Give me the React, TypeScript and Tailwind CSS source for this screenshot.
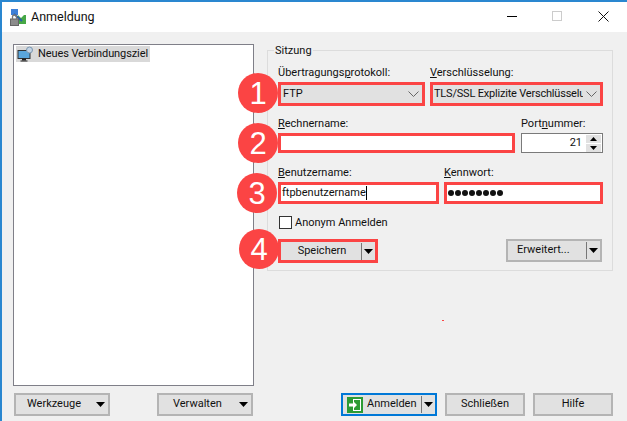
import type { ReactNode } from "react";

const font = { fontFamily: 'Roboto, "Noto Sans", sans-serif' };

function Arrow({ className = "" }: { className?: string }) {
  return <svg width="9" height="5" viewBox="0 0 9 5" className={`shrink-0 ${className}`}><path d="M0 0h9L4.500 5z" fill="#000" /></svg>;
}
function Chevron() {
  return <svg width="11" height="6" viewBox="0 0 11 6" className="shrink-0"><path d="M.5.500 5.500 5.500 10.500.500" fill="none" stroke="#666" /></svg>;
}
function Label({ first, rest, u }: { first?: string; u: string; rest: string }) {
  return <div className="h-[16px] text-[11px] leading-[16px] text-[#111] whitespace-nowrap">{first}<span className="underline">{u}</span>{rest}</div>;
}
function Num({ n, pos }: { n: number; pos: string }) {
  return <div className={`absolute flex h-[40px] w-[40px] items-center justify-center rounded-full bg-[#fb4444] text-[31px] leading-none text-white ${pos}`} style={{ fontFamily: '"Liberation Sans", sans-serif' }}>{n}</div>;
}
function Btn({ children, className = "" }: { children: ReactNode; className?: string }) {
  return <div className={`flex h-[23px] items-center border-2 border-[#b4b4b4] bg-[#e1e1e1] text-[11px] text-[#111] ${className}`}>{children}</div>;
}

export default function App() {
  return (
    <div className="relative flex h-[421px] w-[627px] flex-col overflow-hidden border-l-2 border-t-2 border-[#2a87d0] bg-[#f0f0f0]" style={font}>
      <div className="flex h-[30px] shrink-0 items-center bg-white pl-[8px]">
        <svg width="17" height="17" viewBox="0 0 17 17" className="shrink-0">
          <rect x="1" y="0" width="7" height="6" fill="#3d80d8" />
          <path d="M8 6l3 3 3-3 2 0v9H7z" fill="#46a846" />
          <path d="M4 5l8 7" stroke="#2a5ea8" strokeWidth="2" />
          <rect x="0.500" y="10" width="8" height="6.500" fill="#8c8c8c" stroke="#666" />
          <path d="M2.500 10V8a2 2 0 0 1 4 0v2" fill="none" stroke="#777" strokeWidth="1.300" />
        </svg>
        <span className="ml-[4px] text-[12.500px] text-[#111]">Anmeldung</span>
        <div className="mb-[2px] ml-auto flex items-center">
          <div className="h-px w-[10px] bg-black" />
          <div className="ml-[35px] h-[10px] w-[10px] border border-[#ccc]" />
          <svg width="11" height="11" viewBox="0 0 11 11" className="ml-[36px] mr-[18px]"><path d="M.5.500l10 10M10.500.500l-10 10" stroke="#111" /></svg>
        </div>
      </div>

      <div className="flex flex-1 pb-[5px] pl-[11px]">
        <div className="flex w-[241px] flex-col">
          <div className="mt-[12px] h-[342px] border border-[#7f7f88] bg-white pl-[2px] pt-[1px]">
            <div className="flex h-[16px] w-[134px] items-center bg-[#d9d9d9] pl-[1px] text-[11px] text-[#111]">
              <svg width="17" height="16" viewBox="0 0 17 16" className="shrink-0">
                <rect x="1" y="4.500" width="12" height="8" fill="#5aa6dc" stroke="#333" />
                <rect x="5" y="12.500" width="4" height="2" fill="#222" />
                <rect x="3.500" y="14.500" width="7" height="1" fill="#222" />
                <circle cx="12.500" cy="4" r="3" fill="#c4d4e4" stroke="#7a96b0" />
              </svg>
              <span className="ml-[4px] whitespace-nowrap tracking-[-0.1px]">Neues Verbindungsziel</span>
            </div>
          </div>
          <div className="mt-[7px] flex justify-between pl-[1px] pr-[1px]">
            <Btn className="w-[96px] pl-[11px]"><span>Werkzeuge</span><Arrow className="ml-auto mr-[3px]" /></Btn>
            <Btn className="w-[96px] pl-[14px]"><span>Verwalten</span><Arrow className="ml-auto mr-[3px]" /></Btn>
          </div>
        </div>

        <div className="ml-[13px] flex w-[346px] flex-col">
          <div className="mt-[18px] flex h-[221px] flex-col border border-[#dcdcdc] pl-[10px] pr-[9px]">
            <div className="ml-[-4px] mt-[-8px] w-fit bg-[#f0f0f0] px-[1px] text-[11px] leading-[16px] text-[#111]">Sitzung</div>
            <div className="mt-[6px] flex gap-[5px]">
              <div className="w-[147px]">
                <Label first="Übertragungs" u="p" rest="rotokoll:" />
                <div className="mt-[1px] flex h-[24px] items-center justify-between border-[3px] border-[#fb4444] bg-[#e1e1e1] pl-[2px] pr-[3px] text-[11px] text-[#111]"><span>FTP</span><Chevron /></div>
              </div>
              <div className="w-[173px]">
                <Label u="V" rest="erschlüsselung:" />
                <div className="mt-[1px] flex h-[24px] items-center justify-between border-[3px] border-[#fb4444] bg-[#e1e1e1] pl-[1px] pr-[3px] text-[11px] text-[#111]"><span className="w-[149px] overflow-hidden whitespace-nowrap tracking-[-0.2px]">TLS/SSL Explizite Verschlüsselung</span><Chevron /></div>
              </div>
            </div>
            <div className="mt-[10px] flex gap-[6px]">
              <div className="w-[237px]">
                <Label u="R" rest="echnername:" />
                <div className="mt-[1px] h-[20px] border-[3px] border-[#fb4444] bg-white" />
              </div>
              <div className="w-[82px]">
                <Label first="Port" u="n" rest="ummer:" />
                <div className="mt-[1px] flex h-[20px] items-center border border-[#7a7a7a] bg-white text-[11px] text-[#111]">
                  <span className="flex-1 pr-[4px] text-right">21</span>
                  <div className="mr-[1px] flex w-[15px] flex-col gap-px">
                    <div className="flex h-[8px] items-center justify-center bg-[#e1e1e1]"><svg width="7" height="4" viewBox="0 0 7 4"><path d="M0 4h7L3.500 0z" /></svg></div>
                    <div className="flex h-[8px] items-center justify-center bg-[#e1e1e1]"><svg width="7" height="4" viewBox="0 0 7 4"><path d="M0 0h7L3.500 4z" /></svg></div>
                  </div>
                </div>
              </div>
            </div>
            <div className="mt-[12px] flex gap-[5px]">
              <div className="w-[161px]">
                <Label u="B" rest="enutzername:" />
                <div className="mt-[1px] flex h-[22px] items-center border-[3px] border-[#fb4444] bg-white pl-[1px] text-[11px] text-[#111]">ftpbenutzername<span className="h-[14px] w-px bg-black" /></div>
              </div>
              <div className="w-[159px]">
                <Label u="K" rest="ennwort:" />
                <div className="mt-[1px] flex h-[22px] items-center gap-[1px] border-[3px] border-[#fb4444] bg-white pl-[1px]">
                  {[0, 1, 2, 3, 4, 5, 6, 7].map((i) => <span key={i} className="h-[6px] w-[6px] rounded-full bg-[#111]" />)}
                </div>
              </div>
            </div>
            <div className="mt-[12px] flex items-center">
              <div className="ml-[1px] h-[13px] w-[13px] border border-[#333] bg-white" />
              <span className="ml-[3px] text-[11px] leading-[13px] text-[#111]">Anonym Anmelden</span>
            </div>
            <div className="mt-[10px] flex justify-between">
              <div className="flex h-[24px] w-[100px] items-center border-[3px] border-[#fb4444] bg-[#e1e1e1] text-[11px] text-[#111]">
                <span className="flex-1 pl-[2px] text-center">Speichern</span>
                <span className="h-[17px] w-[1px] bg-[#777]" />
                <Arrow className="mx-[2px]" />
              </div>
              <Btn className="mr-[1px] w-[96px] pl-[9px]">
                <span>Erweitert...</span>
                <span className="ml-auto h-[17px] w-[1px] bg-[#777]" />
                <Arrow className="mx-[2px]" />
              </Btn>
            </div>
          </div>

          <div className="ml-[74px] mt-auto flex gap-[8px]">
            <div className="flex h-[23px] w-[96px] items-center border-2 border-[#0078d7] bg-[#e1e1e1] text-[11px] text-[#111]">
              <svg width="16" height="16" viewBox="0 0 16 16" className="ml-[4px] shrink-0">
                <rect width="16" height="16" fill="#2c9b34" />
                <rect x="6.500" y="2.500" width="7" height="11" fill="none" stroke="#fff" />
                <path d="M2 6.500h4V4l4 4-4 4V9.500H2z" fill="#fff" />
              </svg>
              <span className="ml-[4px]">Anmelden</span>
              <span className="ml-auto h-[17px] w-[1px] bg-[#777]" />
              <Arrow className="mx-[2px]" />
            </div>
            <Btn className="w-[80px] justify-center">Schließen</Btn>
            <Btn className="w-[80px] justify-center">Hilfe</Btn>
          </div>
        </div>
      </div>

      <div className="absolute left-[440px] top-[318px] h-px w-[2px] bg-[#fb4444]" />
      <Num n={1} pos="left-[236px] top-[71px]" />
      <Num n={2} pos="left-[236px] top-[121px]" />
      <Num n={3} pos="left-[235px] top-[171px]" />
      <Num n={4} pos="left-[237px] top-[227px]" />
    </div>
  );
}
